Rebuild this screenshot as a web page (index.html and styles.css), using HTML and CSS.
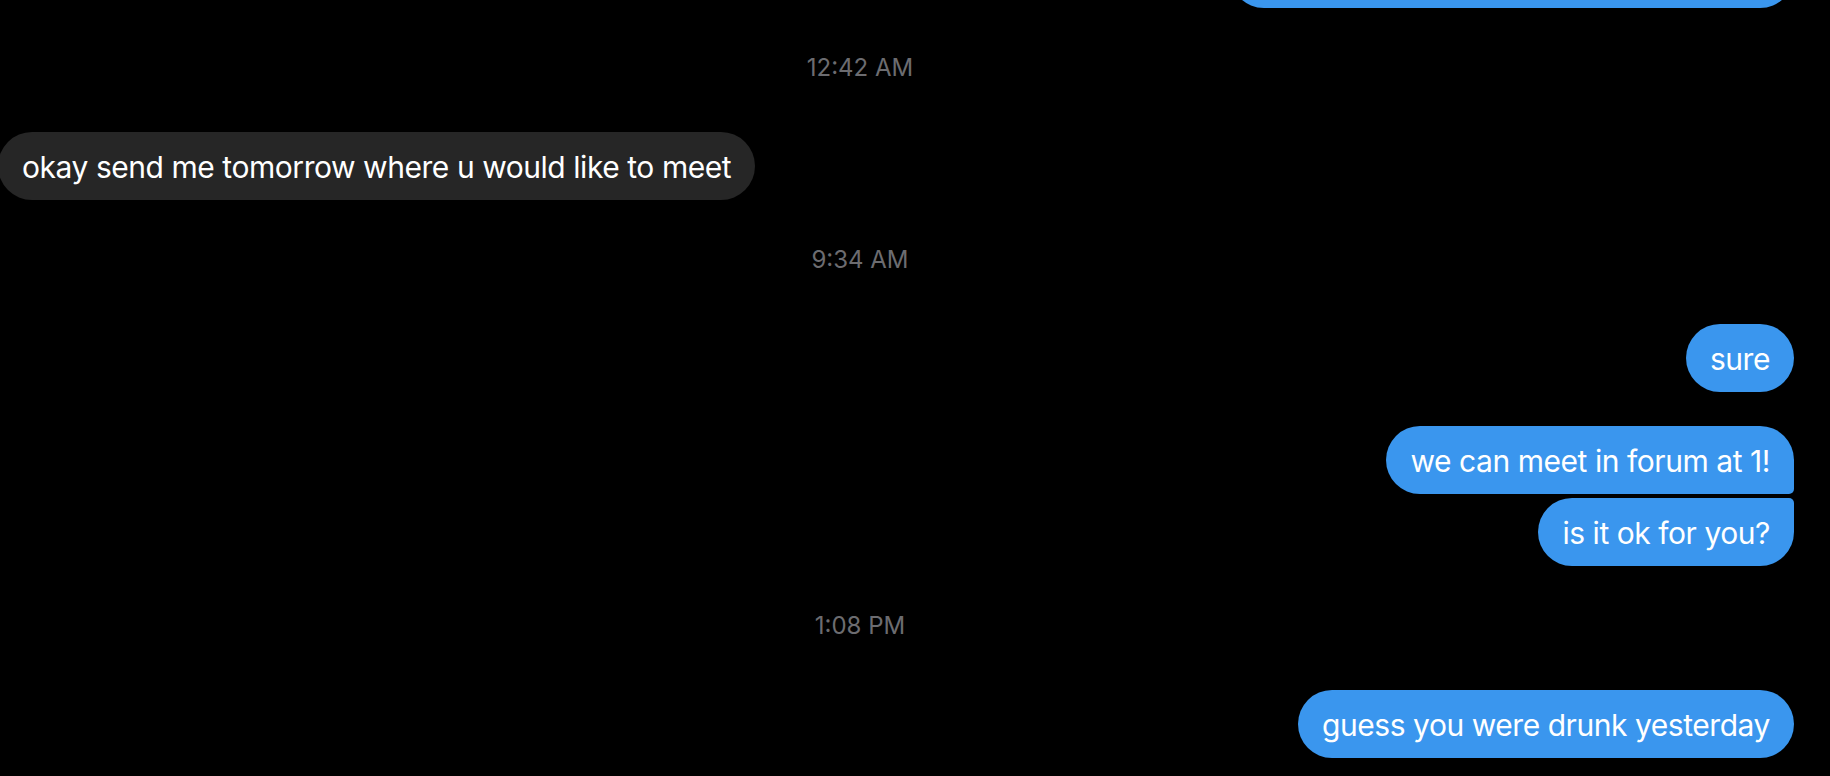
FILE: index.html
```html
<!DOCTYPE html>
<html lang="en">
<head>
<meta charset="utf-8">
<title>Messages</title>
<link rel="stylesheet" href="styles.css">
</head>
<body>
<main class="thread">
  <div class="group outgoing">
    <div class="bubble out solo cut"></div>
  </div>

  <div class="stamp">12:42 AM</div>

  <div class="group incoming">
    <div class="bubble in solo">okay send me tomorrow where u would like to meet</div>
  </div>

  <div class="stamp">9:34 AM</div>

  <div class="group outgoing">
    <div class="bubble out solo">sure</div>
  </div>

  <div class="group outgoing spaced">
    <div class="bubble out first">we can meet in forum at 1!</div>
    <div class="bubble out last">is it ok for you?</div>
  </div>

  <div class="stamp">1:08 PM</div>

  <div class="group outgoing">
    <div class="bubble out solo">guess you were drunk yesterday</div>
  </div>
</main>
</body>
</html>
```

FILE: styles.css
```css
html, body {
  margin: 0;
  padding: 0;
  background: #000;
  height: 100%;
  overflow: hidden;
}

body {
  font-family: Inter, "Noto Sans", "Liberation Sans", sans-serif;
  color: #fff;
  -webkit-font-smoothing: antialiased;
}

.thread {
  display: flex;
  flex-direction: column;
  padding: 0 36px 0 0;
  margin-top: -60px;
}

.group {
  display: flex;
  flex-direction: column;
  gap: 4px;
}

.group.outgoing {
  align-items: flex-end;
}

.group.incoming {
  align-items: flex-start;
  margin-left: -2px;
}

.group.spaced {
  margin-top: 34px;
}

.bubble {
  font-size: 30px;
  line-height: 40px;
  letter-spacing: -0.45px;
  padding: 15px 24px 13px;
  border-radius: 34px;
  white-space: nowrap;
  box-sizing: border-box;
}

.bubble.out {
  background: #3a96ee;
  color: #fff;
}

.bubble.in {
  background: #262626;
  color: #fff;
}

.bubble.out.first {
  border-bottom-right-radius: 5px;
}

.bubble.out.last {
  border-top-right-radius: 5px;
}

.bubble.cut {
  width: 564px;
  height: 68px;
}

.stamp {
  font-size: 24px;
  line-height: 32px;
  color: #6c6c70;
  text-align: center;
  margin: 44px 74px 48px 0;
}
```
